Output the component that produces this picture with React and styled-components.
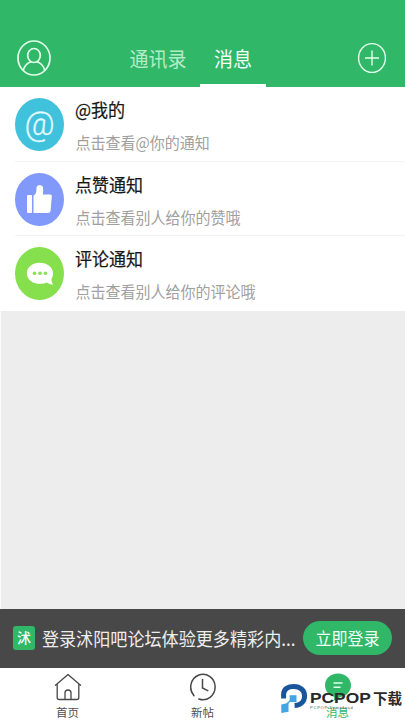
import React, { useState } from 'react'
import styled, { createGlobalStyle } from 'styled-components'

const GlobalStyle = createGlobalStyle`
  * {
    box-sizing: border-box;
  }
  body {
    margin: 0;
    background: #ededed;
    font-family: "Noto Sans CJK SC", "Noto Sans", sans-serif;
  }
`;

const Page = styled.div`
  position: relative;
  display: flex;
  flex-direction: column;
  width: 405px;
  height: 720px;
  overflow: hidden;
  background: #ededed;
`;

const Header = styled.header`
  display: flex;
  align-items: flex-end;
  justify-content: space-between;
  height: 87px;
  padding: 0 18px 0 16px;
  background: #30b768;
`;

const HeaderButton = styled.button`
  display: flex;
  padding: 0;
  margin-bottom: ${({ $bottom }) => $bottom}px;
  border: none;
  background: none;
`;

const Tabs = styled.nav`
  display: flex;
  margin-left: 64px;
  margin-right: auto;
`;

const Tab = styled.div`
  width: ${({ $width }) => $width}px;
  height: 55px;
  padding-top: 12px;
  border-bottom: 3px solid ${({ $active }) => ($active ? '#fff' : 'transparent')};
  text-align: center;
  font-size: 19px;
  line-height: 28px;
  white-space: nowrap;
  color: ${({ $active }) => ($active ? '#f2fff6' : '#b4ecc8')};
`;

const Tall = styled.span`
  display: inline-block;
  transform: scaleY(1.07);
`;

const List = styled.main`
  background: #fff;
`;

const Row = styled.div`
  display: flex;
  height: 73.5px;
  padding: 11px 0 0 15px;

  &:last-child {
    height: 75px;
  }
`;

const Badge = styled.div`
  display: flex;
  align-items: center;
  justify-content: center;
  flex: none;
  width: 49px;
  height: 53px;
  border-radius: 50%;
  background: ${({ $color }) => $color};
`;

const AtSign = styled.span`
  margin-top: -2px;
  font-family: Roboto, sans-serif;
  font-size: 33px;
  font-weight: 300;
  line-height: 40px;
  color: #e4fbff;
  -webkit-text-stroke: 0.3px #e4fbff;
`;

const RowText = styled.div`
  margin: -2px 0 0 11px;
`;

const RowTitle = styled.div`
  height: 25px;
  font-size: 17px;
  line-height: 25px;
  color: #161616;
  -webkit-text-stroke: 0.2px #161616;
`;

const RowDesc = styled.div`
  margin-top: 11px;
  padding-left: 0.5px;
  font-size: 15px;
  line-height: 22px;
  color: #a0a0a0;
`;

const Divider = styled.div`
  height: 1px;
  margin-left: 15px;
  background: #f2f2f2;
`;

const Blank = styled.div`
  flex: 1;
  border-left: 1px solid #fafafa;
`;

const LoginBar = styled.div`
  display: flex;
  align-items: center;
  flex: none;
  height: 59px;
  padding: 0 13px 1px;
  background: #484848;
`;

const Logo = styled.div`
  width: 22px;
  height: 24px;
  border-radius: 3px;
  background: #30b768;
  text-align: center;
  font-size: 14px;
  font-weight: 500;
  line-height: 23px;
  color: #fff;
`;

const LoginText = styled.div`
  width: 262px;
  margin-left: 7px;
  padding-top: 1px;
  font-size: 17.1px;
  line-height: 28px;
  white-space: nowrap;
  color: #eee;
`;

const LoginButton = styled.button`
  flex: none;
  width: 89px;
  height: 34px;
  padding: 0;
  border: none;
  border-radius: 17px;
  background: #30b768;
  font-family: inherit;
  font-size: 16px;
  line-height: 34px;
  color: #f2fff6;
`;

const BottomNav = styled.footer`
  display: grid;
  flex: none;
  grid-template-columns: repeat(3, 135px);
  height: 52px;
  background: #fff;
`;

const NavItem = styled.div`
  display: flex;
  flex-direction: column;
  align-items: center;
  padding-top: 5px;
  color: ${({ $active }) => ($active ? '#30b768' : '#4f4f4f')};
`;

const NavLabel = styled.div`
  height: 18px;
  margin-top: 2px;
  font-size: 11.5px;
  line-height: 18px;
`;

const Watermark = styled.div`
  position: absolute;
  left: 281px;
  top: 683px;
  display: flex;
  color: #292929;
`;

const Brand = styled.div`
  width: 62px;
  margin: 5px 0 0 2px;
`;

const BrandName = styled.div`
  height: 18px;
  font-family: "Liberation Sans", sans-serif;
  font-size: 15.5px;
  font-weight: bold;
  line-height: 20px;
  transform: scaleX(1.12);
  transform-origin: left;
`;

const BrandSite = styled.div`
  font-family: "Liberation Sans", sans-serif;
  font-size: 4px;
  letter-spacing: 0.8px;
  line-height: 4px;
  white-space: nowrap;
  color: #555;
`;

const BrandSuffix = styled.div`
  margin: 4px 0 0 1px;
  font-size: 14.5px;
  font-weight: bold;
  line-height: 22px;
`;

const UserIcon = () => (
  <svg width="36" height="38" viewBox="0 0 36 38" fill="none" stroke="#e2ffeb" strokeWidth="1.7">
    <ellipse cx="18" cy="19" rx="16" ry="17" />
    <ellipse cx="18" cy="16.5" rx="6.3" ry="7" />
    <path d="M7.2 31.5C8.3 27 11 24 14.8 22.7M28.8 31.5C27.7 27 25 24 21.2 22.7" />
  </svg>
);

const PlusIcon = () => (
  <svg width="30" height="32" viewBox="0 0 30 32" fill="none" stroke="#e2ffeb" strokeWidth="1.4">
    <ellipse cx="15" cy="16" rx="13.4" ry="14.4" />
    <path d="M8 16H22M15 8.5V23.5" />
  </svg>
);

const ThumbIcon = () => (
  <svg width="25" height="30" viewBox="0 0 25 30" fill="#fff">
    <rect x="0" y="11" width="5" height="18" rx="1" />
    <path d="M6.5 11.4C10 10 9.2 5.5 9.6 3.2C10.2 .2 15.4 .2 16 3.6C16.4 6.5 16 8.6 15.8 10.4H23C24.6 10.4 25 11.4 24.8 12.6L23.6 26.5C23.4 28 22.6 29 21 29H6.5Z" />
  </svg>
);

const CommentIcon = () => (
  <svg width="28" height="24" viewBox="0 0 28 24">
    <path d="M13.8 .8C6.5 .8 .8 5 .8 11.2S6.5 21.8 13.8 21.8C16.5 21.8 18.6 21.4 20.6 20.4C22.5 21.6 24.8 22.6 27.3 22.7C26 21 25.5 19.2 25.5 17C26.4 15.4 27 13.6 27 11.2C27 5 21 .8 13.8 .8Z" fill="#fff" />
    <g fill="#86df4c">
      <circle cx="8.5" cy="11.3" r="1.7" />
      <circle cx="14" cy="11.3" r="1.7" />
      <circle cx="19.5" cy="11.3" r="1.7" />
    </g>
  </svg>
);

const HomeIcon = () => (
  <svg width="28" height="28" viewBox="0 0 28 28" fill="none" stroke="#484848" strokeWidth="1.3" strokeLinejoin="round" strokeLinecap="round">
    <path d="M1.5 12.3L14 1.4L26.5 12.3M3.2 11V24.5Q3.2 26.5 5.2 26.5H22.8Q24.8 26.5 24.8 24.5V11" />
    <path d="M11 26.3V20Q11 17 14 17T17 20V26.3" />
  </svg>
);

const ClockIcon = () => (
  <svg width="28" height="28" viewBox="0 0 28 28" fill="none" stroke="#484848" strokeWidth="1.5" strokeLinecap="round">
    <path d="M5 22.7A12.2 12.7 0 1 1 9.8 26" />
    <path d="M13.5 6.5V15L18.8 17.6" />
  </svg>
);

const MessageIcon = () => (
  <svg width="28" height="28" viewBox="0 0 28 28">
    <path d="M14 .4C6.5 .4 1 5.5 1 12.2C1 18 5 22.5 10.2 23.8L10 27.6L16.5 24.1C22.5 23 27 18.3 27 12.2C27 5.5 21.5 .4 14 .4Z" fill="#30b768" />
    <path d="M9.5 10H18.5M9.5 14.3H16.5" stroke="#e2ffeb" strokeWidth="1.5" />
  </svg>
);

const BrandIcon = () => (
  <svg width="27" height="31" viewBox="0 0 27 31" fill="none">
    <path d="M2.6 15.5V11.5C2.6 6 7.2 3.4 12.8 3.4C19.4 3.4 23.6 7.6 23.6 12.9C23.6 18.4 19.6 22.2 13.6 22.4" stroke="#19559b" strokeWidth="5" />
    <path d="M.3 21.5L7.5 20V28.8L.3 30Z" fill="#42a5e4" />
    <path d="M8.7 12.2H15.5V19H8.7Z" fill="#42a5e4" />
    <path d="M4 22.5L12 15.5" stroke="#42a5e4" strokeWidth="1.6" />
  </svg>
);

const notices = [
  { title: '@我的', desc: '点击查看@你的通知', color: '#40c1dc', icon: <AtSign>@</AtSign> },
  { title: '点赞通知', desc: '点击查看别人给你的赞哦', color: '#8099fb', icon: <ThumbIcon /> },
  { title: '评论通知', desc: '点击查看别人给你的评论哦', color: '#86df4c', icon: <CommentIcon /> },
];

const App = () => {
  const [tab, setTab] = useState('message');

  return (
    <>
      <GlobalStyle />
      <Page>
        <Header>
          <HeaderButton $bottom={10}>
            <UserIcon />
          </HeaderButton>
          <Tabs>
            <Tab $width={84} $active={tab === 'contacts'} onClick={() => setTab('contacts')}>
              <Tall>通讯录</Tall>
            </Tab>
            <Tab $width={66} $active={tab === 'message'} onClick={() => setTab('message')}>
              <Tall>消息</Tall>
            </Tab>
          </Tabs>
          <HeaderButton $bottom={13}>
            <PlusIcon />
          </HeaderButton>
        </Header>

        <List>
          {notices.map((item, i) => (
            <React.Fragment key={item.title}>
              {i > 0 && <Divider />}
              <Row>
                <Badge $color={item.color}>{item.icon}</Badge>
                <RowText>
                  <RowTitle><Tall>{item.title}</Tall></RowTitle>
                  <RowDesc><Tall>{item.desc}</Tall></RowDesc>
                </RowText>
              </Row>
            </React.Fragment>
          ))}
        </List>

        <Blank />

        <LoginBar>
          <Logo>沭</Logo>
          <LoginText><Tall>登录沭阳吧论坛体验更多精彩内...</Tall></LoginText>
          <LoginButton><Tall>立即登录</Tall></LoginButton>
        </LoginBar>

        <BottomNav>
          <NavItem>
            <HomeIcon />
            <NavLabel>首页</NavLabel>
          </NavItem>
          <NavItem>
            <ClockIcon />
            <NavLabel>新帖</NavLabel>
          </NavItem>
          <NavItem $active>
            <MessageIcon />
            <NavLabel>消息</NavLabel>
          </NavItem>
        </BottomNav>

        <Watermark>
          <BrandIcon />
          <Brand>
            <BrandName>PCPOP</BrandName>
            <BrandSite>PCPOP.Download</BrandSite>
          </Brand>
          <BrandSuffix>下载</BrandSuffix>
        </Watermark>
      </Page>
    </>
  )
}

export default App
